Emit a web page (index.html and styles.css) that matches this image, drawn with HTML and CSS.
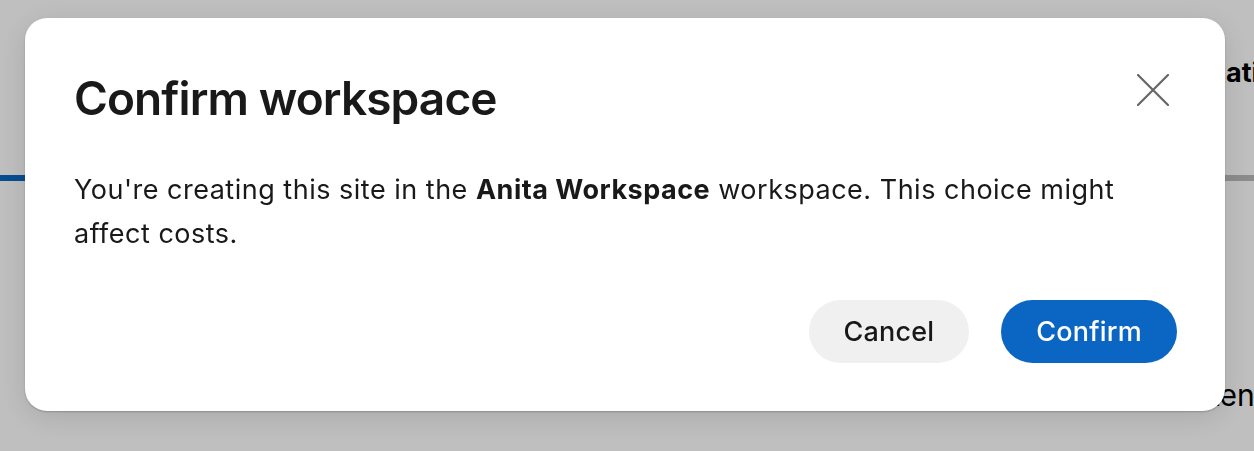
FILE: index.html
```html
<!DOCTYPE html>
<html lang="en">
<head>
<meta charset="utf-8">
<title>Confirm workspace</title>
<link rel="stylesheet" href="styles.css">
</head>
<body>
<div class="page">
  <div class="page-head"><span class="page-title">ation</span></div>
  <div class="tabs"><div class="tab tab-active"></div></div>
  <div class="page-body"><span class="page-text">ten</span></div>
</div>
<div class="overlay">
  <div class="modal" role="dialog" aria-labelledby="modal-title">
    <div class="modal-header">
      <h2 class="modal-title" id="modal-title">Confirm workspace</h2>
      <button class="close-btn" aria-label="Dismiss">
        <svg width="32" height="32" viewBox="0 0 32 32" aria-hidden="true">
          <path d="M1 1 L31 31 M31 1 L1 31" stroke="#666666" stroke-width="2.2" stroke-linecap="round" fill="none"/>
        </svg>
      </button>
    </div>
    <p class="modal-text">You're creating this site in the <strong>Anita Workspace</strong> workspace. This choice might affect costs.</p>
    <div class="modal-actions">
      <button class="btn btn-secondary">Cancel</button>
      <button class="btn btn-primary">Confirm</button>
    </div>
  </div>
</div>
</body>
</html>
```
FILE: styles.css
```css
* { box-sizing: border-box; }
html, body {
  margin: 0;
  padding: 0;
  width: 1254px;
  height: 451px;
  overflow: hidden;
  background: #ffffff;
  font-family: Inter, "Noto Sans", sans-serif;
  color: rgba(0, 0, 0, 0.9);
}
.page {
  width: 1254px;
  height: 451px;
  overflow: hidden;
}
.page-head {
  height: 175px;
  padding-left: 1226px;
  padding-top: 56px;
  white-space: nowrap;
}
.page-title {
  font-size: 27px;
  font-weight: 700;
  line-height: 34px;
  color: #000;
}
.tabs {
  height: 6px;
  background: #bbbbbb;
  display: flex;
}
.tab {
  width: 160px;
}
.tab-active {
  background: #0a66c2;
}
.page-body {
  padding-left: 1210px;
  padding-top: 195px;
  white-space: nowrap;
}
.page-text {
  font-size: 30px;
  line-height: 38px;
  color: #000;
}
.overlay {
  position: fixed;
  inset: 0;
  background: rgba(0, 0, 0, 0.25);
  padding: 18px 29px 0 25px;
}
.modal {
  width: 1200px;
  height: 393px;
  background: #ffffff;
  border-radius: 22px;
  padding: 49px 48px 48px 49px;
  box-shadow: 0 1px 2px rgba(0, 0, 0, 0.22), 0 6px 30px rgba(0, 0, 0, 0.12);
  display: flex;
  flex-direction: column;
}
.modal-header {
  display: flex;
  justify-content: space-between;
  align-items: flex-start;
  height: 62px;
}
.modal-title {
  margin: 0;
  font-size: 46px;
  font-weight: 600;
  line-height: 62px;
  letter-spacing: -0.9px;
}
.close-btn {
  width: 48px;
  height: 48px;
  margin-top: -1px;
  border: none;
  background: transparent;
  padding: 0;
  display: flex;
  align-items: center;
  justify-content: center;
}
.modal-text {
  margin: 39px 0 0;
  font-size: 27px;
  line-height: 44px;
  font-weight: 400;
  letter-spacing: 0.5px;
}
.modal-text strong {
  font-weight: 700;
}
.modal-actions {
  margin-top: auto;
  display: flex;
  justify-content: flex-end;
  gap: 32px;
}
.btn {
  height: 63px;
  border: none;
  border-radius: 32px;
  padding: 0 35px;
  font-family: Inter, "Noto Sans", sans-serif;
  font-size: 27px;
  font-weight: 500;
  letter-spacing: 0.2px;
}
.btn-secondary {
  background: #f0f0f0;
  color: rgba(0, 0, 0, 0.9);
}
.btn-primary {
  background: #0a66c2;
  color: #ffffff;
}
```
